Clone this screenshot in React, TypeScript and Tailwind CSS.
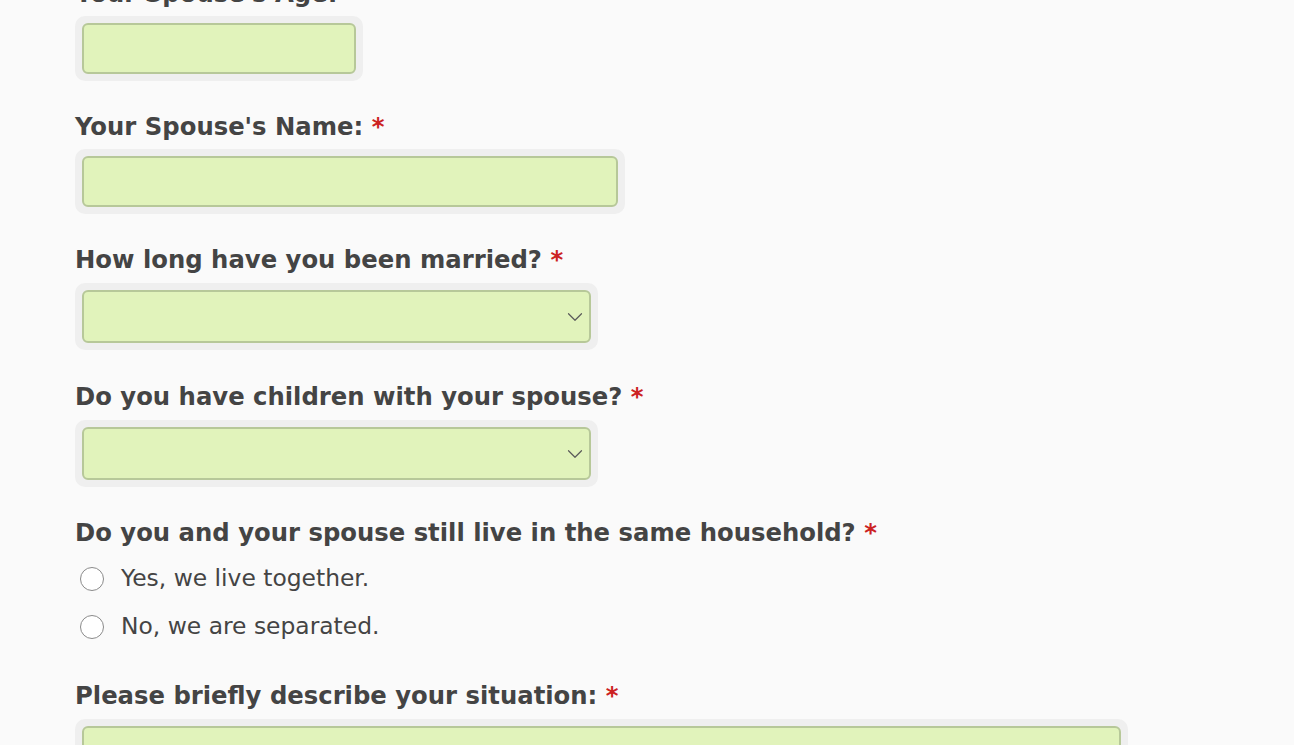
import { ChevronDown } from 'lucide-react';

function Label({ text }: { text: string }) {
  return (
    <div className="h-[32px] leading-[32px] text-[24.3px] font-bold text-[#444444] whitespace-nowrap">
      {text} <span className="text-[#cc2222]">*</span>
    </div>
  );
}

function TextBox({ width, height = 51 }: { width: string; height?: number }) {
  return (
    <div className={`${width} p-[7px] rounded-[10px] bg-[#efefef]`}>
      <div
        className="w-full rounded-[6px] border-2 border-[#b7c899] bg-[#e1f3bb]"
        style={{ height }}
      ></div>
    </div>
  );
}

function SelectBox() {
  return (
    <div className="w-[523px] p-[7px] rounded-[10px] bg-[#efefef]">
      <div className="h-[53px] w-full rounded-[6px] border-2 border-[#b7c899] bg-[#e1f3bb] flex items-center justify-end pr-[1px]">
        <ChevronDown className="w-[26px] h-[26px] text-[#5a5a5a]" strokeWidth={1.1} />
      </div>
    </div>
  );
}

function Radio({ text }: { text: string }) {
  return (
    <div className="flex items-center h-[48px] pl-[5px] gap-[17px]">
      <div className="w-[24px] h-[24px] rounded-full border-[1.5px] border-[#8a8a8a] bg-white"></div>
      <span className="text-[23.4px] text-[#444444]">{text}</span>
    </div>
  );
}

export default function App() {
  return (
    <div
      className="w-[1294px] h-[745px] overflow-hidden bg-[#fafafa]"
      style={{ fontFamily: '"DejaVu Sans", "Open Sans", sans-serif' }}
    >
      <div className="pl-[75px] mt-[-22px] flex flex-col">
        {/* Spouse age */}
        <div className="h-[32px] leading-[32px] text-[24.3px] font-bold text-[#444444]">Your Spouse's Age:</div>
        <div className="mt-[6px]">
          <TextBox width="w-[288px]" />
        </div>

        {/* Spouse name */}
        <div className="mt-[30px]">
          <Label text="Your Spouse's Name:" />
        </div>
        <div className="mt-[6px]">
          <TextBox width="w-[550px]" />
        </div>

        {/* Married */}
        <div className="mt-[30px]">
          <Label text="How long have you been married?" />
        </div>
        <div className="mt-[7px]">
          <SelectBox />
        </div>

        {/* Children */}
        <div className="mt-[31px]">
          <Label text="Do you have children with your spouse?" />
        </div>
        <div className="mt-[7px]">
          <SelectBox />
        </div>

        {/* Household */}
        <div className="mt-[30px]">
          <Label text="Do you and your spouse still live in the same household?" />
        </div>
        <div className="mt-[6px] flex flex-col">
          <Radio text="Yes, we live together." />
          <Radio text="No, we are separated." />
        </div>

        {/* Situation */}
        <div className="mt-[29px]">
          <Label text="Please briefly describe your situation:" />
        </div>
        <div className="mt-[7px]">
          <TextBox width="w-[1053px]" height={120} />
        </div>
      </div>
    </div>
  );
}
